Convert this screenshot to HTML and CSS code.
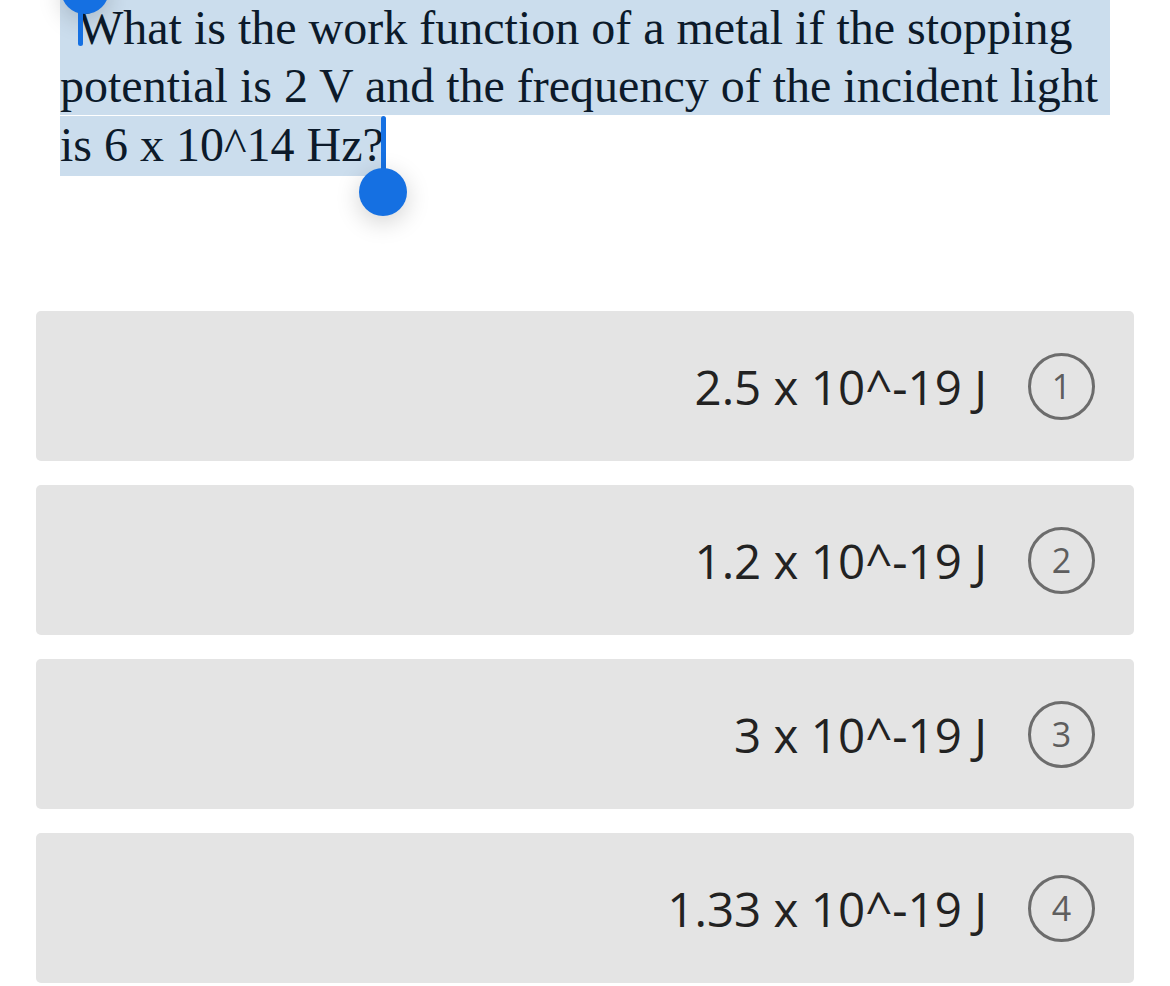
FILE: index.html
```html
<!DOCTYPE html>
<html>
<head>
<meta charset="utf-8">
<link rel="stylesheet" href="styles.css">
</head>
<body>
<div class="question">
  <div class="line line-full first">What is the work function of a metal if the stopping</div>
  <div class="line line-full">potential is 2 V and the frequency of the incident light</div>
  <div class="line line-last"><span class="sel">is 6 x 10^14 Hz?</span></div>
  <div class="handle handle-start"><span class="knob"></span><span class="stem"></span></div>
  <div class="handle handle-end"><span class="stem"></span><span class="knob"></span></div>
</div>
<div class="options">
  <div class="option"><span class="text">2.5 x 10^-19 J</span><span class="num">1</span></div>
  <div class="option"><span class="text">1.2 x 10^-19 J</span><span class="num">2</span></div>
  <div class="option"><span class="text">3 x 10^-19 J</span><span class="num">3</span></div>
  <div class="option"><span class="text">1.33 x 10^-19 J</span><span class="num">4</span></div>
</div>
</body>
</html>
```
FILE: styles.css
```css
html, body {
  margin: 0;
  padding: 0;
  background: #ffffff;
}
body {
  width: 1170px;
  height: 986px;
  overflow: hidden;
}
.question {
  position: relative;
  padding: 0 60px 0 60px;
  width: 1050px;
  font-family: "Liberation Serif", "Times New Roman", serif;
  font-size: 48px;
  color: #0c1a2a;
}
.line {
  height: 59px;
  line-height: 59px;
  white-space: nowrap;
}
.line-full {
  background: #cbdded;
}
.first {
  height: 56px;
  line-height: 56px;
  text-indent: 18px;
}
.line-last {
  height: 60px;
}
.sel {
  display: inline-block;
  background: #cbdded;
  height: 60px;
  line-height: 58px;
}
.handle {
  position: absolute;
  display: flex;
  flex-direction: column;
  align-items: center;
  width: 50px;
}
.handle .knob {
  width: 48px;
  height: 48px;
  border-radius: 50%;
  background: #1570e2;
  box-shadow: 0 6px 24px rgba(0, 0, 0, 0.18);
}
.handle .stem {
  width: 5px;
  background: #1570e2;
  border-radius: 3px;
}
.handle-start {
  left: 55px;
  top: -34px;
}
.handle-start .knob {
  margin-left: 10px;
}
.handle-start .stem {
  height: 36px;
  margin-top: -4px;
}
.handle-end {
  left: 358px;
  top: 116px;
}
.handle-end .stem {
  height: 56px;
  margin-bottom: -4px;
}
.options {
  display: flex;
  flex-direction: column;
  gap: 24px;
  padding: 136px 36px 0 36px;
}
.option {
  height: 150px;
  background: #e4e4e4;
  border-radius: 5px;
  display: flex;
  align-items: center;
  justify-content: flex-end;
  padding-right: 39px;
  gap: 41px;
}
.option .text {
  font-family: "Open Sans", "Liberation Sans", sans-serif;
  font-size: 47.5px;
  color: #222222;
}
.option .num {
  width: 61px;
  height: 61px;
  border: 3px solid #6c6c6c;
  border-radius: 50%;
  display: flex;
  align-items: center;
  justify-content: center;
  font-family: "Open Sans", "Liberation Sans", sans-serif;
  font-size: 34px;
  font-weight: 500;
  color: #5e5e5e;
  box-sizing: content-box;
}
```
